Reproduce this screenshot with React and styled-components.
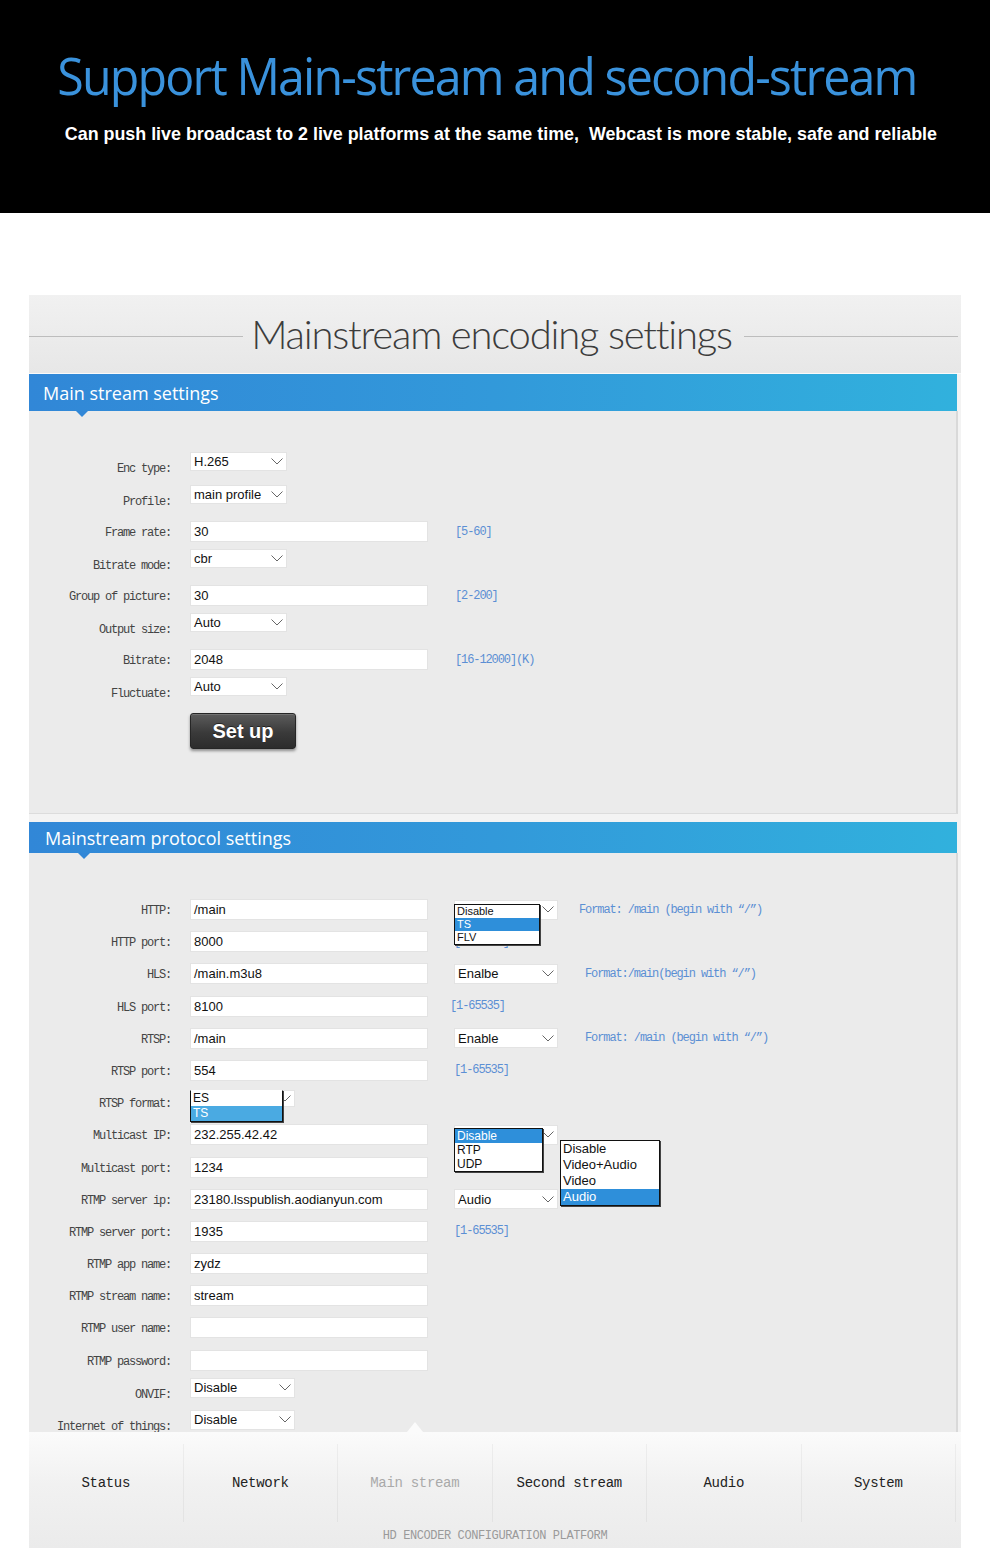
import React from 'react';
import styled, { createGlobalStyle } from 'styled-components';

const Global = createGlobalStyle`
  html, body { margin: 0; padding: 0; background: #fff; }
  body { font-family: "Liberation Sans", Arial, sans-serif; }
  * { box-sizing: border-box; }
`;

const Page = styled.div`
  width: 990px;
  background: #fff;
  padding-bottom: 10px;
`;

const Hero = styled.header`
  height: 213px;
  background: #000;
  display: flex;
  flex-direction: column;
  align-items: center;
  overflow: hidden;
`;

const HeroTitle = styled.h1`
  margin: 42px 0 0;
  font-family: "Open Sans", sans-serif;
  font-weight: 400;
  font-size: 52px;
  line-height: 66px;
  letter-spacing: -2px;
  color: #3a92dc;
  white-space: nowrap;
  transform: translateX(-8px) scaleX(0.93);
`;

const HeroSub = styled.p`
  margin: 15px 0 0;
  font-family: "Liberation Sans", Arial, sans-serif;
  font-weight: 700;
  font-size: 19px;
  line-height: 22px;
  color: #fff;
  white-space: nowrap;
  transform: translateX(6px) scaleX(0.94);
`;

const Panel = styled.main`
  margin: 82px 0 0 29px;
  width: 932px;
  background: #f3f3f3;
`;

const TitleArea = styled.div`
  height: 79px;
  display: flex;
  align-items: center;
  background: linear-gradient(#f1f1f1, #e7e7e7);
  border-bottom: 1px solid #fafafa;
  padding-right: 3px;
`;

const TitleLine = styled.span`
  flex: 1;
  height: 1px;
  margin-top: 4px;
  background: #bdbdbd;
`;

const TitleText = styled.h2`
  margin: 0 ${p => p.$r}px 0 8px;
  font-family: Lato, "Open Sans", sans-serif;
  font-weight: 300;
  font-size: 40px;
  letter-spacing: -1.2px;
  color: #3c3c3c;
  white-space: nowrap;
`;

const Section = styled.section`
  width: 929px;
  margin-top: ${p => p.$gap}px;
`;

const Bar = styled.div`
  position: relative;
  height: ${p => p.$h}px;
  width: 928px;
  display: flex;
  align-items: center;
  padding-left: ${p => p.$pad}px;
  background: linear-gradient(90deg, #3187d7 0%, #3299da 50%, #31b1dd 100%);
  font-family: "Open Sans", sans-serif;
  font-size: 18px;
  letter-spacing: 0;
  color: #fff;
  &::after {
    content: "";
    position: absolute;
    left: ${p => p.$tip}px;
    bottom: -6px;
    border-left: 6px solid transparent;
    border-right: 6px solid transparent;
    border-top: 6px solid #3187d7;
  }
`;

const Body = styled.div`
  background: #ebebeb;
  border-right: 2px solid #d9d9d9;
  border-bottom: ${p => (p.$closed ? '1px solid #dcdcdc' : 'none')};
  padding: ${p => p.$top}px 0 ${p => p.$bottom}px;
`;

const Row = styled.div`
  display: flex;
  align-items: flex-start;
  height: ${p => p.$h}px;
`;

const Label = styled.div`
  width: 142px;
  flex: none;
  margin-right: 19px;
  padding-top: ${p => (p.$low ? 10 : 5)}px;
  text-align: right;
  font-family: "Liberation Mono", monospace;
  font-size: 12px;
  line-height: 14px;
  letter-spacing: -1.2px;
  color: #444;
  white-space: nowrap;
`;

const TextInput = styled.div`
  width: 238px;
  height: 21px;
  flex: none;
  background: #fff;
  border: 1px solid #e3e3e3;
  padding-left: 3px;
  font-size: 13px;
  line-height: 19px;
  color: #111;
  white-space: nowrap;
  overflow: hidden;
`;

const SelectBox = styled.div`
  position: relative;
  width: ${p => p.$w}px;
  height: ${p => p.$h}px;
  flex: none;
  margin-top: ${p => p.$dy || 0}px;
  background: #fff;
  border: 1px solid #e3e3e3;
  display: flex;
  align-items: center;
  justify-content: space-between;
  padding: 0 3px;
  font-size: 13px;
  color: #111;
  white-space: nowrap;
`;

const Extra = styled.div`
  display: flex;
  align-items: center;
  height: 21px;
  margin-left: ${p => p.$ml}px;
  gap: ${p => p.$gap}px;
`;

const Hint = styled.span`
  font-family: "Liberation Mono", monospace;
  font-size: 12px;
  letter-spacing: -1.1px;
  color: #5b8fd4;
  white-space: nowrap;
`;

const ListBox = styled.ul`
  position: absolute;
  z-index: 2;
  left: ${p => p.$left}px;
  top: ${p => (p.$top === undefined ? 'auto' : `${p.$top}px`)};
  bottom: ${p => (p.$bottom === undefined ? 'auto' : `${p.$bottom}px`)};
  width: ${p => p.$w}px;
  margin: 0;
  padding: 0;
  list-style: none;
  background: #fff;
  border: 1px solid #111;
  border-top-color: ${p => (p.$noTop ? '#fff' : '#111')};
  box-shadow: 1px 1px 0 #444;
  font-size: ${p => p.$fs}px;
  line-height: ${p => p.$lh}px;
  color: #111;
`;

const Option = styled.li`
  padding-left: 2px;
  background: ${p => (p.$on ? p.$hl || '#2e8fda' : 'transparent')};
  color: ${p => (p.$on ? '#fff' : '#111')};
`;

const SetUp = styled.button`
  display: block;
  margin: 0 0 0 161px;
  width: 106px;
  height: 36px;
  border: 1px solid #262626;
  border-radius: 3px;
  background: linear-gradient(#5c5c5c, #3a3a3a 55%, #2c2c2c);
  box-shadow: 0 2px 3px rgba(0, 0, 0, 0.4), inset 0 1px 0 rgba(255, 255, 255, 0.15);
  font-family: "Liberation Sans", Arial, sans-serif;
  font-weight: 700;
  font-size: 20px;
  color: #fff;
  text-shadow: 0 -1px 0 rgba(0, 0, 0, 0.5);
  padding: 0;
`;

const Nav = styled.nav`
  position: relative;
  width: 932px;
  height: 116px;
  padding-top: 12px;
  background: linear-gradient(#fbfbfb, #f1f1f1 45%, #ebebeb);
`;

const Tabs = styled.div`
  display: grid;
  grid-template-columns: repeat(6, 154.5px);
  height: 78px;
`;

const Tab = styled.div`
  position: relative;
  display: flex;
  align-items: center;
  justify-content: center;
  border-right: 1px solid rgba(0, 0, 0, 0.045);
  font-family: "Liberation Mono", monospace;
  font-size: 14px;
  letter-spacing: -0.3px;
  color: ${p => (p.$active ? '#a9a9a9' : '#222')};
  &::before {
    content: "";
    display: ${p => (p.$active ? 'block' : 'none')};
    position: absolute;
    top: -22px;
    left: 50%;
    margin-left: -8px;
    border-left: 8px solid transparent;
    border-right: 8px solid transparent;
    border-bottom: 10px solid #fbfbfb;
  }
`;

const Footer = styled.div`
  margin-top: 6px;
  text-align: center;
  font-family: "Liberation Mono", monospace;
  font-size: 12px;
  line-height: 16px;
  letter-spacing: -0.4px;
  color: #9a9a9a;
`;

const Chevron = () => (
  <svg width="12" height="7" viewBox="0 0 12 7" aria-hidden="true">
    <polyline points="0.5,0.5 6,6 11.5,0.5" fill="none" stroke="#666" strokeWidth="1" />
  </svg>
);

const Select = ({ value, w = 97, h = 19, dy, children }) => (
  <SelectBox $w={w} $h={h} $dy={dy}>
    <span>{value}</span>
    <Chevron />
    {children}
  </SelectBox>
);

const mainRows = [
  { label: 'Enc type:', type: 'select', value: 'H.265', h: 33 },
  { label: 'Profile:', type: 'select', value: 'main profile', h: 36 },
  { label: 'Frame rate:', type: 'input', value: '30', hint: '[5-60]', h: 28 },
  { label: 'Bitrate mode:', type: 'select', value: 'cbr', h: 36 },
  { label: 'Group of picture:', type: 'input', value: '30', hint: '[2-200]', h: 28 },
  { label: 'Output size:', type: 'select', value: 'Auto', h: 36 },
  { label: 'Bitrate:', type: 'input', value: '2048', hint: '[16-12000](K)', h: 28 },
  { label: 'Fluctuate:', type: 'select', value: 'Auto', h: 36 },
];

const fmt = 'Format: /main (begin with \u201c/\u201d)';

const protoRows = [
  {
    label: 'HTTP:', value: '/main', extra: 'http', hint: fmt, gap: 21,
  },
  { label: 'HTTP port:', value: '8000', hint: '[1-65535]' },
  {
    label: 'HLS:', value: '/main.m3u8', select: 'Enalbe', hint: 'Format:/main(begin with \u201c/\u201d)', gap: 27,
  },
  { label: 'HLS port:', value: '8100', hint: '[1-65535]', ml: 22 },
  {
    label: 'RTSP:', value: '/main', select: 'Enable', hint: fmt, gap: 27,
  },
  { label: 'RTSP port:', value: '554', hint: '[1-65535]' },
  { label: 'RTSP format:', control: 'rtspfmt' },
  { label: 'Multicast IP:', value: '232.255.42.42', extra: 'multicast' },
  { label: 'Multicast port:', value: '1234' },
  { label: 'RTMP server ip:', value: '23180.lsspublish.aodianyun.com', extra: 'audio' },
  { label: 'RTMP server port:', value: '1935', hint: '[1-65535]' },
  { label: 'RTMP app name:', value: 'zydz' },
  { label: 'RTMP stream name:', value: 'stream' },
  { label: 'RTMP user name:', value: '' },
  { label: 'RTMP password:', value: '', h: 28.2 },
  { label: 'ONVIF:', control: 'select', value: 'Disable', h: 32 },
  { label: 'Internet of things:', control: 'select', value: 'Disable', h: 22 },
];

const renderExtra = (r) => {
  if (r.extra === 'http') {
    return (
      <Extra $ml={26} $gap={r.gap}>
        <Select value="" w={104} h={20}>
          <ListBox $left={-1} $top={3} $w={86} $fs={11} $lh={13}>
            <Option>Disable</Option>
            <Option $on>TS</Option>
            <Option>FLV</Option>
          </ListBox>
        </Select>
        <Hint>{r.hint}</Hint>
      </Extra>
    );
  }
  if (r.extra === 'multicast') {
    return (
      <Extra $ml={26} $gap={0}>
        <Select value="" w={104} h={20}>
          <ListBox $left={-1} $top={2} $w={89} $fs={12} $lh={14}>
            <Option $on>Disable</Option>
            <Option>RTP</Option>
            <Option>UDP</Option>
          </ListBox>
        </Select>
      </Extra>
    );
  }
  if (r.extra === 'audio') {
    return (
      <Extra $ml={26} $gap={0}>
        <Select value="Audio" w={104} h={20}>
          <ListBox $left={105} $bottom={2} $w={100} $fs={13} $lh={16}>
            <Option>Disable</Option>
            <Option>Video+Audio</Option>
            <Option>Video</Option>
            <Option $on>Audio</Option>
          </ListBox>
        </Select>
      </Extra>
    );
  }
  if (r.select) {
    return (
      <Extra $ml={26} $gap={r.gap}>
        <Select value={r.select} w={104} h={20} />
        <Hint>{r.hint}</Hint>
      </Extra>
    );
  }
  if (r.hint) {
    return (
      <Extra $ml={r.ml || 26} $gap={0}>
        <Hint>{r.hint}</Hint>
      </Extra>
    );
  }
  return null;
};

const renderControl = (r) => {
  if (r.control === 'rtspfmt') {
    return (
      <Select value="" w={105} h={17} dy={-2}>
        <ListBox $left={-1} $top={-1} $w={93} $fs={12} $lh={15} $noTop>
          <Option>ES</Option>
          <Option $on $hl="#4aaae2">TS</Option>
        </ListBox>
      </Select>
    );
  }
  if (r.control === 'select') {
    return <Select value={r.value} w={105} h={20} />;
  }
  return <TextInput>{r.value}</TextInput>;
};

const tabs = ['Status', 'Network', 'Main stream', 'Second stream', 'Audio', 'System'];

export default function App() {
  return (
    <Page>
      <Global />
      <Hero>
        <HeroTitle>Support Main-stream and second-stream</HeroTitle>
        <HeroSub>Can push live broadcast to 2 live platforms at the same time,&nbsp; Webcast is more stable, safe and reliable</HeroSub>
      </Hero>

      <Panel>
        <TitleArea>
          <TitleLine />
          <TitleText $r={12}>Mainstream encoding settings</TitleText>
          <TitleLine />
        </TitleArea>

        <Section $gap={0}>
          <Bar $h={37} $pad={14} $tip={47}>Main stream settings</Bar>
          <Body $top={41} $bottom={64} $closed>
            {mainRows.map((r) => (
              <Row key={r.label} $h={r.h}>
                <Label $low={r.type === 'select'}>{r.label}</Label>
                {r.type === 'select' ? (
                  <Select value={r.value} w={97} h={19} />
                ) : (
                  <TextInput>{r.value}</TextInput>
                )}
                {r.hint && (
                  <Extra $ml={27} $gap={0}>
                    <Hint>{r.hint}</Hint>
                  </Extra>
                )}
              </Row>
            ))}
            <SetUp type="button">Set up</SetUp>
          </Body>
        </Section>

        <Section $gap={8}>
          <Bar $h={31} $pad={16} $tip={49}>Mainstream protocol settings</Bar>
          <Body $top={46} $bottom={0}>
            {protoRows.map((r) => (
              <Row key={r.label} $h={r.h || 32.2}>
                <Label $low={r.control === 'select'}>{r.label}</Label>
                {renderControl(r)}
                {renderExtra(r)}
              </Row>
            ))}
          </Body>
        </Section>

        <Nav>
          <Tabs>
            {tabs.map((t) => (
              <Tab key={t} $active={t === 'Main stream'}>{t}</Tab>
            ))}
          </Tabs>
          <Footer>HD ENCODER CONFIGURATION PLATFORM</Footer>
        </Nav>
      </Panel>
    </Page>
  );
}
